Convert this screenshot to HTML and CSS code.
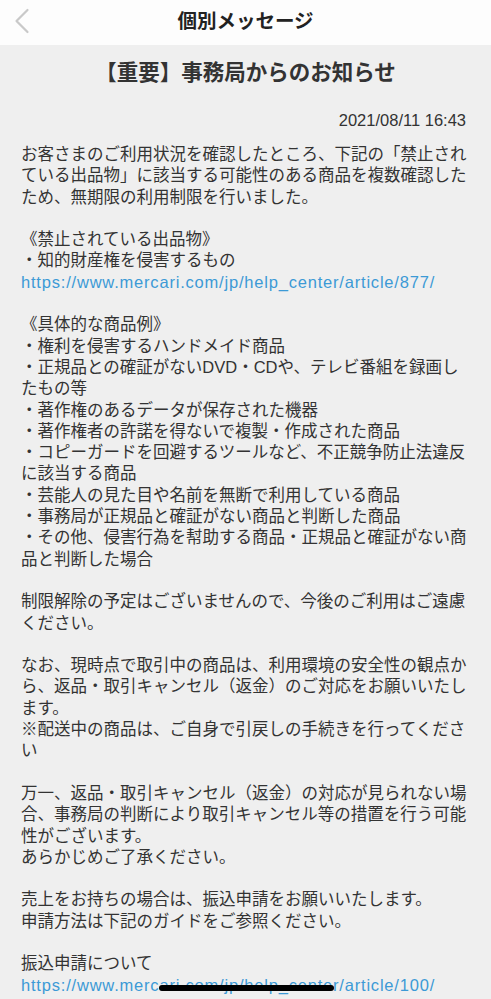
FILE: index.html
```html
<!DOCTYPE html>
<html lang="ja">
<head>
    <meta charset="UTF-8">
    <meta name="viewport" content="width=device-width, initial-scale=1.0">
    <title>個別メッセージ</title>
    <link rel="stylesheet" href="styles.css">
</head>
<body>
    <!-- ヘッダー -->
    <div class="header">
        <span class="back">
            <svg width="16" height="26" viewBox="0 0 16 26">
                <polyline points="13.5,2 2.5,13 13.5,24" fill="none" stroke="#c9c9c9" stroke-width="2.2" stroke-linecap="round" stroke-linejoin="round"/>
            </svg>
        </span>
        <h1 class="header-title">個別メッセージ</h1>
    </div>

    <!-- メッセージ本文 -->
    <div class="main">
        <h2 class="msg-title">【重要】事務局からのお知らせ</h2>
        <p class="msg-date">2021/08/11 16:43</p>
        <div class="msg-body">
            <p>お客さまのご利用状況を確認したところ、下記の「禁止されている出品物」に該当する可能性のある商品を複数確認したため、無期限の利用制限を行いました。</p>
            <p>《禁止されている出品物》<br>
            ・知的財産権を侵害するもの<br>
            <a href="#">https://www.mercari.com/jp/help_center/article/877/</a></p>
            <p>《具体的な商品例》<br>
            ・権利を侵害するハンドメイド商品<br>
            ・正規品との確証がないDVD・CDや、テレビ番組を録画したもの等<br>
            ・著作権のあるデータが保存された機器<br>
            ・著作権者の許諾を得ないで複製・作成された商品<br>
            ・コピーガードを回避するツールなど、不正競争防止法違反に該当する商品<br>
            ・芸能人の見た目や名前を無断で利用している商品<br>
            ・事務局が正規品と確証がない商品と判断した商品<br>
            ・その他、侵害行為を幇助する商品・正規品と確証がない商品と判断した場合</p>
            <p>制限解除の予定はございませんので、今後のご利用はご遠慮ください。</p>
            <p>なお、現時点で取引中の商品は、利用環境の安全性の観点から、返品・取引キャンセル（返金）のご対応をお願いいたします。<br>
            ※配送中の商品は、ご自身で引戻しの手続きを行ってください</p>
            <p>万一、返品・取引キャンセル（返金）の対応が見られない場合、事務局の判断により取引キャンセル等の措置を行う可能性がございます。<br>
            あらかじめご了承ください。</p>
            <p>売上をお持ちの場合は、振込申請をお願いいたします。<br>
            申請方法は下記のガイドをご参照ください。</p>
            <p>振込申請について<br>
            <a href="#">https://www.mercari.com/jp/help_center/article/100/</a></p>
        </div>
    </div>

    <div class="home-bar"></div>
</body>
</html>
```

FILE: styles.css
```css
*{
    margin: 0;
    padding: 0;
    box-sizing: border-box;
}

body{
    background: #efefef;
    font-family: "Liberation Sans", "Noto Sans CJK JP", sans-serif;
    color: #333;
}

.header{
    height: 45px;
    background: #fdfdfd;
    display: flex;
    align-items: center;
    justify-content: center;
    position: relative;
}

.header .back{
    position: absolute;
    left: 14px;
    top: 8px;
}

.header-title{
    font-size: 19.5px;
    font-weight: 700;
    color: #222;
    line-height: 42px;
    margin-top: -3px;
}

.main{
    padding: 13px 21px 0;
}

.msg-title{
    font-size: 21.5px;
    font-weight: 700;
    line-height: 31px;
    text-align: center;
    color: #333;
}

.msg-date{
    margin-top: 21px;
    font-size: 16.5px;
    line-height: 21px;
    text-align: right;
    padding-right: 4px;
}

.msg-body{
    margin-top: 13px;
    font-size: 16.5px;
    line-height: 21.3px;
    word-break: break-all;
}

.msg-body p{
    margin-bottom: 21.3px;
}

.msg-body a{
    color: #3c9ad6;
    text-decoration: none;
    letter-spacing: 0.8px;
}

.home-bar{
    position: fixed;
    left: 50%;
    bottom: 8px;
    width: 175px;
    height: 6px;
    margin-left: -87px;
    border-radius: 3px;
    background: #000;
}
```
